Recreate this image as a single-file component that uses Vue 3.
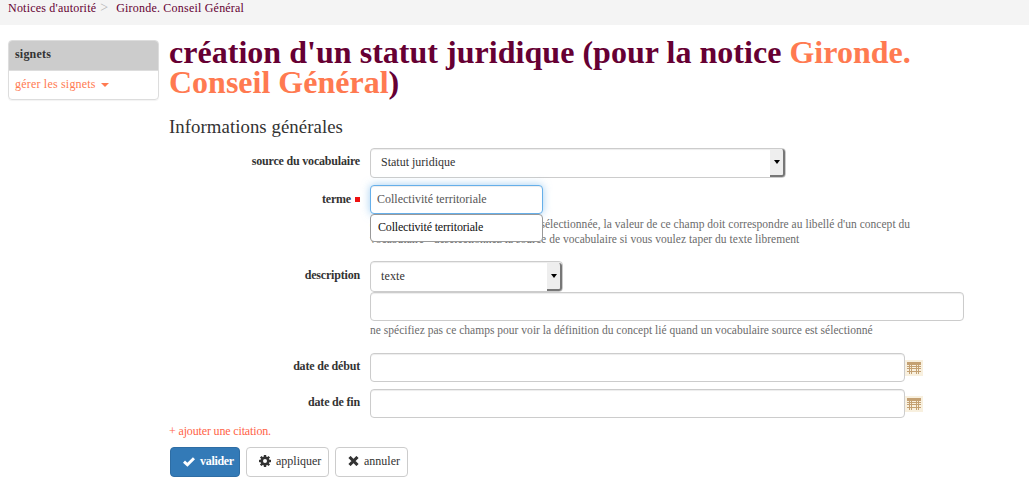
<script setup>
import { ref } from 'vue'

const term = ref('Collectivité territoriale')
const dates = ['date de début', 'date de fin']
</script>

<template>
  <div class="page">
    <nav class="breadcrumb">
      <a class="crumb">Notices d'autorité</a>
      <span class="sep">&gt;</span>
      <a class="crumb">Gironde. Conseil Général</a>
    </nav>

    <div class="columns">
      <aside class="panel">
        <div class="panel-head">signets</div>
        <div class="panel-body"><span class="manage">gérer les signets</span><i class="caret"></i></div>
      </aside>

      <main class="content">
        <h1><span class="title-a">création d'un statut juridique (pour la notice <a>Gironde.</a></span><br /><span class="title-b"><a>Conseil Général</a>)</span></h1>
        <h2>Informations générales</h2>

        <div class="row row-source">
          <label>source du vocabulaire</label>
          <div class="select wide"><span class="value">Statut juridique</span><b class="arrow"><i></i></b></div>
        </div>

        <div class="row row-term">
          <label class="low">terme<i class="required"></i></label>
          <div class="field">
            <input v-model="term" class="input term" type="text" />
            <ul class="suggestions"><li>Collectivité territoriale</li></ul>
            <p class="help help-term">
              quand une source de vocabulaire est sélectionnée, la valeur de ce champ doit correspondre au libellé d'un concept du<br />
              vocabulaire - désélectionnez la source de vocabulaire si vous voulez taper du texte librement
            </p>
          </div>
        </div>

        <div class="row row-desc">
          <label class="low">description</label>
          <div class="field">
            <div class="select small"><span class="kind">texte</span><b class="arrow"><i></i></b></div>
            <input class="input desc" type="text" />
            <p class="help help-desc">ne spécifiez pas ce champs pour voir la définition du concept lié quand un vocabulaire source est sélectionné</p>
          </div>
        </div>

        <div v-for="d in dates" :key="d" class="row row-date">
          <label>{{ d }}</label>
          <input class="input date" type="text" />
          <svg class="calendar" width="18" height="16" viewBox="0 0 18 16" shape-rendering="crispEdges">
            <rect width="18" height="16" fill="#f8f0df" />
            <path fill="#c4a173" d="M2 2h14v3H2zM2 6h14v1H2zM2 8h14v1H2zM2 11h14v1H2zM4 5h1v9H4zM6 5h1v9H6zM11 5h1v9h-1zM13 5h1v9h-1z" />
          </svg>
        </div>

        <a class="add">+ ajouter une citation.</a>

        <div class="buttons">
          <button class="btn primary">
            <svg width="12" height="10" viewBox="0 0 12 10"><path d="M1 4.7 4.4 7.8 11 1.2" fill="none" stroke="#fff" stroke-width="3" /></svg>
            <span class="text">valider</span>
          </button>
          <button class="btn apply">
            <svg class="icon" width="12" height="12" viewBox="0 0 12 12">
              <g fill="#333"><path d="M4.8 0h2.4v12H4.8z" /><path d="M4.8 0h2.4v12H4.8z" transform="rotate(45 6 6)" /><path d="M4.8 0h2.4v12H4.8z" transform="rotate(90 6 6)" /><path d="M4.8 0h2.4v12H4.8z" transform="rotate(135 6 6)" /></g>
              <circle cx="6" cy="6" r="3.3" fill="#fff" stroke="#333" stroke-width="2.6" />
            </svg>
            <span class="text">appliquer</span>
          </button>
          <button class="btn cancel">
            <svg class="icon" width="11" height="10" viewBox="0 0 11 10"><path d="M1.5 1 9.5 9M9.5 1 1.5 9" fill="none" stroke="#333" stroke-width="3.1" /></svg>
            <span class="text">annuler</span>
          </button>
        </div>
      </main>
    </div>
  </div>
</template>

<style>
body { margin: 0; background: #fff; overflow: hidden; }
</style>

<style scoped>
* { box-sizing: border-box; }
.page {
  width: 1029px;
  height: 481px;
  overflow: hidden;
  font: 12px/15px "Liberation Serif", "Times New Roman", serif;
  color: #333;
  white-space: nowrap;
}
.breadcrumb {
  height: 25px;
  padding: 0 8px;
  background: #f4f4f4;
  color: #603;
  display: flex;
  line-height: 16px;
}
.crumb { letter-spacing: .21px; }
.sep { color: #b5b5b5; font-size: 14px; margin: 0 8px 0 4px; }
.columns { display: flex; padding: 12px 8px 0; }
.panel {
  width: 151px;
  height: 60px;
  margin-top: 3px;
  border: 1px solid #ddd;
  border-radius: 4px;
  overflow: hidden;
  flex: none;
  box-shadow: 0 1px 1px rgba(0, 0, 0, .05);
}
.panel-head { height: 30px; padding: 6px; background: #ccc; font-weight: bold; letter-spacing: .2px; border-bottom: 1px solid #ddd; }
.panel-body { padding: 6px; color: #ff7a51; display: flex; align-items: center; }
.manage { letter-spacing: .2px; }
.caret { margin-left: 5px; border: 4px solid transparent; border-top-color: #ff7a51; border-bottom: 0; }
.content { margin-left: 10px; flex: 1; }
h1 { margin: 0; font-size: 32px; line-height: 30px; height: 60px; color: #603; }
h1 a { color: #ff7a51; }
.title-a { letter-spacing: .03px; }
h2 { margin: 20px 0 11px; height: 20px; font-size: 18.8px; line-height: 20px; font-weight: normal; letter-spacing: .06px; }
.row { display: flex; align-items: flex-start; }
label { width: 191px; margin-right: 10px; padding-top: 6px; text-align: right; font-weight: bold; letter-spacing: -.19px; flex: none; }
.low { padding-top: 7px; }
.row-source { height: 37px; }
.row-term { height: 76px; }
.row-desc { height: 92px; }
.row-date { height: 36px; }
.required { display: inline-block; width: 5px; height: 5px; margin: 0 0 1px 4px; background: #e11; }
.select {
  display: flex;
  height: 30px;
  align-items: center;
  padding-left: 10px;
  border: 1px solid #ccc;
  border-radius: 4px;
  box-shadow: inset 0 1px 1px rgba(0, 0, 0, .075);
}
.value { margin-top: -2px; }
.kind { letter-spacing: .15px; }
.wide { width: 416px; }
.small { width: 193px; height: 31px; }
.arrow {
  width: 15px;
  height: 28px;
  margin-left: auto;
  display: grid;
  place-items: center;
  background: #eee;
  border-right: 2px solid #777;
  border-bottom: 2px solid #777;
  border-radius: 0 3px 3px 0;
}
.arrow i { border: 3.5px solid transparent; border-top: 4px solid #000; border-bottom: 0; }
.input {
  display: block;
  height: 29px;
  margin: 0;
  padding: 0 6px;
  border: 1px solid #ccc;
  border-radius: 4px;
  background: #fff;
  font: inherit;
  color: #555;
  outline: 0;
  box-shadow: inset 0 1px 1px rgba(0, 0, 0, .075);
}
.field { position: relative; }
.term {
  width: 173px;
  border-color: #66afe9;
  box-shadow: inset 0 1px 1px rgba(0, 0, 0, .075), 0 0 8px rgba(102, 175, 233, .6);
}
.suggestions {
  position: absolute;
  top: 29px;
  left: 0;
  width: 173px;
  height: 28px;
  margin: 0;
  padding: 5px 7px;
  list-style: none;
  background: #fff;
  border: 1px solid #999;
  border-radius: 4px;
  color: #111;
  letter-spacing: -.18px;
}
.help { margin: 3px 0 0; font-size: 11.5px; letter-spacing: .02px; color: #6b6b6b; }
.help-term { letter-spacing: .033px; }
.help-desc { margin-top: 2px; }
.desc { width: 594px; }
.date { width: 535px; }
.calendar { margin-top: 7px; }
.add { display: block; margin-top: -1px; color: #ff6347; letter-spacing: -.15px; }
.buttons { display: flex; gap: 6px; margin: 8px 0 0 1px; }
.btn {
  height: 30px;
  padding: 0;
  display: flex;
  align-items: center;
  border: 1px solid #ccc;
  border-radius: 4px;
  background: #fff;
  color: #333;
  font: inherit;
}
.text { margin-top: -2px; }
.icon { margin-top: -2px; }
.primary { width: 70px; padding-left: 12px; gap: 5px; background: #337ab7; border-color: #2e6da4; color: #fff; font-weight: bold; letter-spacing: -.3px; }
.apply { width: 83px; padding-left: 12px; gap: 5px; }
.cancel { width: 73px; padding-left: 12px; gap: 5px; }
</style>
